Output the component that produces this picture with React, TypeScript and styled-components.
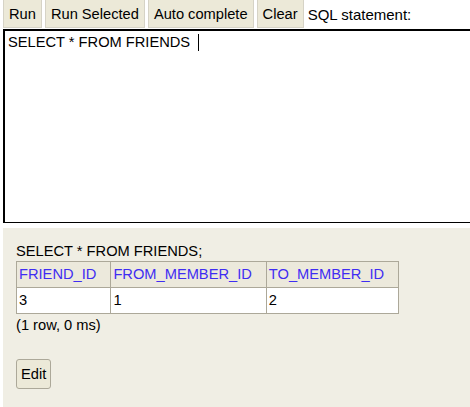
import React from "react";
import styled, { createGlobalStyle } from "styled-components";

const Global = createGlobalStyle`
  html, body { margin: 0; padding: 0; background: #fff; overflow: hidden; }
  body { font-family: "Liberation Sans", Arial, sans-serif; font-size: 14.67px; color: #000; }
`;

const Page = styled.div`
  width: 470px;
  height: 407px;
  overflow: hidden;
  display: flex;
  flex-direction: column;
  padding-left: 3px;
  box-sizing: border-box;
`;

const Toolbar = styled.div`
  display: flex;
  align-items: center;
  gap: 3px;
  height: 28px;
  flex: none;
`;

const ToolButton = styled.button`
  font-family: inherit;
  font-size: 14.67px;
  height: 28px;
  padding: 0 5px;
  margin: 0;
  background: #ece9d8;
  border: 1px solid #d6d3c6;
  border-top: none;
  color: #000;
`;

const Label = styled.span`
  margin-left: 1px;
  white-space: nowrap;
  font-size: 15px;
`;

const Editor = styled.div`
  margin-top: 1px;
  height: 194px;
  width: 480px;
  flex: none;
  box-sizing: border-box;
  border-top: 2px solid #000;
  border-left: 2px solid #000;
  border-bottom: 1px solid #000;
  padding: 3px 0 0 3px;
  line-height: 17px;
  white-space: pre;
`;

const Caret = styled.span`
  display: inline-block;
  width: 1px;
  height: 17px;
  background: #000;
  vertical-align: top;
  margin-left: 8px;
`;

const Result = styled.div`
  margin-top: 5px;
  flex: 1;
  width: 480px;
  background: #f0eee4;
  padding: 13px 0 0 13px;
  box-sizing: border-box;
`;

const Statement = styled.div`
  line-height: 20px;
`;

const Table = styled.table`
  border-collapse: collapse;
  margin-top: 0;
`;

const Th = styled.th`
  text-align: left;
  font-weight: normal;
  background: #ece9dc;
  border: 1px solid #aca899;
  padding: 2px 14px 2px 2px;
  line-height: 21px;
  color: #3f2df2;
`;

const Td = styled.td`
  background: #fff;
  border: 1px solid #aca899;
  padding: 2px 14px 2px 2px;
  line-height: 21px;
`;

const Info = styled.div`
  line-height: 20px;
  margin-top: 1px;
`;

const EditButton = styled.button`
  margin-top: 24px;
  font-family: inherit;
  font-size: 14.67px;
  height: 30px;
  padding: 0 4px;
  background: #ece9d8;
  border: 1px solid #aca899;
  border-radius: 3px;
  color: #000;
`;

export default function App() {
  return (
    <>
      <Global />
      <Page>
        <Toolbar>
          <ToolButton>Run</ToolButton>
          <ToolButton>Run Selected</ToolButton>
          <ToolButton>Auto complete</ToolButton>
          <ToolButton>Clear</ToolButton>
          <Label>SQL statement:</Label>
        </Toolbar>
        <Editor>
          SELECT * FROM FRIENDS<Caret />
        </Editor>
        <Result>
          <Statement>SELECT * FROM FRIENDS;</Statement>
          <Table>
            <thead>
              <tr>
                <Th>FRIEND_ID</Th>
                <Th>FROM_MEMBER_ID</Th>
                <Th>TO_MEMBER_ID</Th>
              </tr>
            </thead>
            <tbody>
              <tr>
                <Td>3</Td>
                <Td>1</Td>
                <Td>2</Td>
              </tr>
            </tbody>
          </Table>
          <Info>(1 row, 0 ms)</Info>
          <EditButton>Edit</EditButton>
        </Result>
      </Page>
    </>
  );
}
